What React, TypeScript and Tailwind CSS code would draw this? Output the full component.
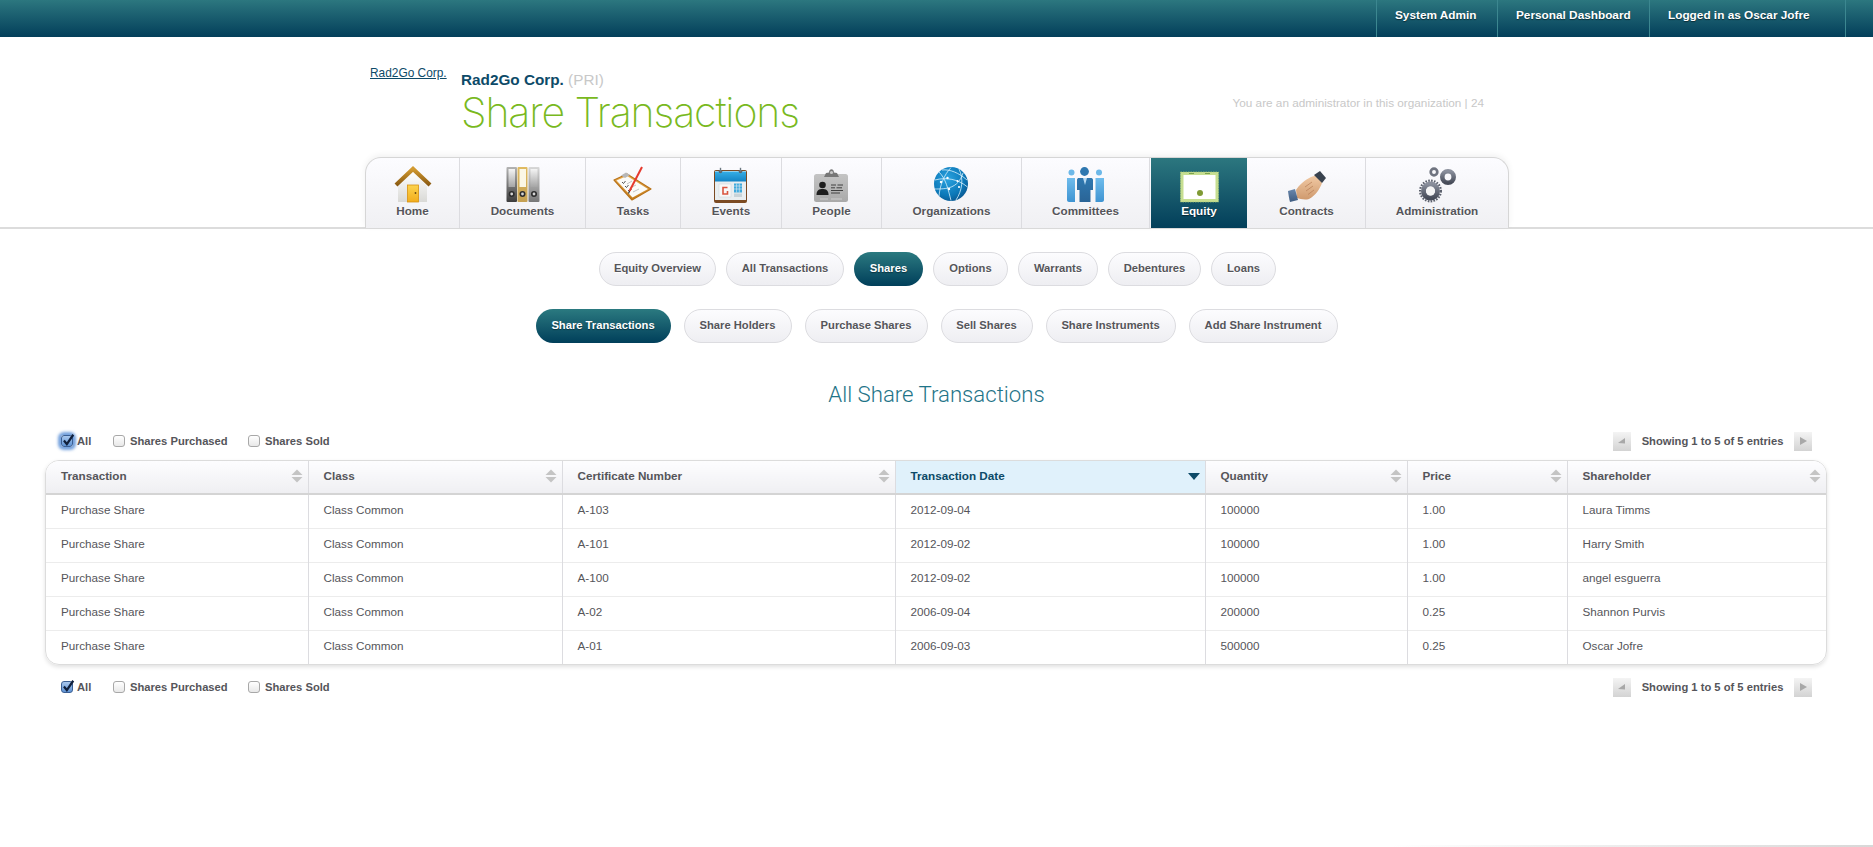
import React from "react";

const Grad = ({ id, c1, c2, x2 = 0, y2 = 1 }: { id: string; c1: string; c2: string; x2?: number; y2?: number }) => (
  <linearGradient id={id} x1="0" y1="0" x2={x2} y2={y2}>
    <stop offset="0" stopColor={c1} />
    <stop offset="1" stopColor={c2} />
  </linearGradient>
);

const Svg = ({ children }: { children: React.ReactNode }) => (
  <svg width="40" height="40" viewBox="0 0 40 40" className="block">
    {children}
  </svg>
);

const HomeIcon = () => (
  <Svg>
    <defs>
      <Grad id="hb" c1="#ffffff" c2="#d9d9d6" />
      <Grad id="hr" c1="#d29a30" c2="#8a5a12" />
      <Grad id="hd" c1="#fcd34d" c2="#f2ad1c" />
    </defs>
    <path d="M5 21 L20 7 L34 21 V37 H5 Z" fill="url(#hb)" />
    <path d="M3 20 L20 4 L37 20" fill="none" stroke="url(#hr)" strokeWidth="4.2" />
    <rect x="14.5" y="20" width="11" height="17" fill="url(#hd)" stroke="#d8920f" strokeWidth="0.8" />
    <circle cx="22.5" cy="28" r="0.9" fill="#6b4a10" />
  </Svg>
);

const DocumentsIcon = () => (
  <Svg>
    <defs>
      <Grad id="d1" c1="#b4b4b4" c2="#3d3d3d" />
      <Grad id="d2" c1="#e0bb62" c2="#c4a052" />
      <Grad id="d3" c1="#d8d8d8" c2="#777777" />
      <Grad id="dl" c1="#f4f4f4" c2="#a5a5a5" />
    </defs>
    <rect x="3.5" y="2" width="10.5" height="35" rx="1" fill="url(#d1)" />
    <rect x="14.5" y="2" width="10" height="35" rx="1" fill="url(#d2)" />
    <rect x="25.5" y="2" width="11" height="35" rx="1" fill="url(#d3)" />
    <rect x="5.5" y="4" width="6.5" height="18" fill="url(#dl)" />
    <rect x="16.5" y="4" width="6.5" height="18" fill="#fbf7e6" />
    <rect x="27.5" y="4" width="7" height="18" fill="url(#dl)" />
    {[8.7, 19.5, 31].map((x) => (
      <g key={x}>
        <circle cx={x} cy="29" r="3" fill="#2c2c2c" />
        <circle cx={x} cy="29" r="1.4" fill="#d5d5d5" />
      </g>
    ))}
  </Svg>
);

const TasksIcon = () => (
  <Svg>
    <defs>
      <Grad id="tb" c1="#f0b458" c2="#c47b18" />
    </defs>
    <path d="M1 15 L14 9 L38 24 L19 35 Z" fill="url(#tb)" stroke="#b9741b" strokeWidth="1.2" strokeLinejoin="round" />
    <path d="M3.5 15.5 L14 11 L35 24 L19.5 32.5 Z" fill="#fbfbf8" />
    <path d="M8 10.5 L13 7.5 L17 10 L12 13 Z" fill="#b7b7b7" />
    <path d="M9 17 l1.5 1.5 l2-2.5 M12 21 l1.5 1.5 l2-2.5 M15 25 l1.5 1.5 l2-2.5" fill="none" stroke="#444" strokeWidth="0.9" />
    <path d="M14 19 L19 16 M17 23 L23 20 M20 27 L26 24" stroke="#b4b4b4" strokeWidth="0.8" />
    <path d="M29 2 L16.5 26" stroke="#e63a2e" strokeWidth="2" />
    <path d="M16.5 26 L15.5 28.5" stroke="#333" strokeWidth="1.2" />
  </Svg>
);

const EventsIcon = () => (
  <Svg>
    <defs>
      <Grad id="eh" c1="#36aee6" c2="#1384c4" />
    </defs>
    <rect x="3" y="5" width="33" height="33" rx="2" fill="#7b4a22" />
    <rect x="4" y="6" width="31" height="29" fill="#e9eef0" />
    <rect x="4" y="6.5" width="31" height="10" fill="url(#eh)" />
    <circle cx="9.5" cy="6.5" r="1.8" fill="#5b6670" />
    <circle cx="29.5" cy="6.5" r="1.8" fill="#5b6670" />
    <rect x="8.8" y="2.8" width="1.4" height="4" fill="#6c7780" />
    <rect x="28.8" y="2.8" width="1.4" height="4" fill="#6c7780" />
    <rect x="23" y="18.5" width="8" height="9" fill="#3ea9dc" />
    <path d="M23 21 H31 M23 24 H31 M25.6 18.5 V27.5 M28.3 18.5 V27.5" stroke="#e9eef0" strokeWidth="0.6" />
    <rect x="8" y="19" width="12" height="13" fill="#f8f8f8" stroke="#ccd4d8" strokeWidth="0.5" />
    <path d="M16.5 22.5 H12 V29 H16.5 V26" fill="none" stroke="#d9553f" strokeWidth="1.6" />
    <rect x="23" y="28.5" width="8" height="3.5" fill="#c8d3d8" />
  </Svg>
);

const PeopleIcon = () => (
  <Svg>
    <defs>
      <Grad id="pb" c1="#c4c4c4" c2="#a9a9a9" />
    </defs>
    <rect x="2" y="9" width="34" height="28" rx="2.5" fill="url(#pb)" />
    <path d="M12 12 L14 8 L17 7.5 C17 3 22 3 22 7.5 L25 8 L27 12 Z" fill="#777" />
    <circle cx="19.5" cy="7.5" r="1.6" fill="#c8c8c8" />
    <circle cx="10.5" cy="20" r="3.3" fill="#1e1e1e" />
    <path d="M4.5 30 C4.5 25 7 24 10.5 24 C14 24 16.5 25 16.5 30 Z" fill="#1e1e1e" />
    <path d="M19 20 H24 M25.5 20 H31 M19 22.8 H23 M24.5 22.8 H30 M19 25.5 H31 M19 28 H28" stroke="#333" strokeWidth="0.9" />
    <path d="M8 34 H16 M19 34 H30" stroke="#bdbdbd" strokeWidth="2" />
  </Svg>
);

const OrgsIcon = () => (
  <Svg>
    <defs>
      <radialGradient id="ob" cx="0.4" cy="0.35" r="0.75">
        <stop offset="0" stopColor="#2aa3e0" />
        <stop offset="0.65" stopColor="#0c78b8" />
        <stop offset="1" stopColor="#0a4f86" />
      </radialGradient>
    </defs>
    <circle cx="19" cy="19" r="17" fill="url(#ob)" />
    <g fill="none" stroke="#d8f1fc" strokeWidth="0.8">
      <path d="M7 7 C14 14 16 24 19 35.5" />
      <path d="M19 2.5 C12 10 8 20 7 31" />
      <path d="M3 15 C14 12 26 14 35.5 22" />
      <path d="M2.5 24 C14 24 26 24 31 8" />
      <path d="M27 4 C32 14 30 26 24 35" />
      <path d="M10 5 C18 4 27 8 35 15" />
    </g>
    <g fill="#fff">
      <circle cx="9" cy="17" r="1.2" />
      <circle cx="15.5" cy="13" r="1.2" />
      <circle cx="25.5" cy="16" r="1.1" />
      <circle cx="17" cy="24" r="1.2" />
      <circle cx="27" cy="22" r="1.1" />
    </g>
  </Svg>
);

const CommitteesIcon = () => (
  <Svg>
    <defs>
      <Grad id="ca" c1="#2f78b0" c2="#2a6496" />
      <Grad id="cb" c1="#6fbcec" c2="#3f94d2" />
    </defs>
    <circle cx="5.5" cy="7.5" r="3" fill="#6cb8e8" />
    <circle cx="33" cy="7.5" r="3" fill="#6cb8e8" />
    <path d="M1 13 H9 V37 H3 C2 37 1 36 1 35 Z" fill="url(#cb)" />
    <path d="M29.5 13 H38 V35 C38 36 37 37 36 37 H29.5 Z" fill="url(#cb)" />
    <circle cx="18.5" cy="6.5" r="4.4" fill="#2f78b0" />
    <path d="M11 15 C11 13.5 12 13 13 13 H24.5 C26 13 27 13.5 27 15 V25 H24.5 V37 H13.5 V25 H11 Z" fill="url(#ca)" />
    <path d="M17 13 L19 20 L21 13 Z" fill="#b9dbf3" />
  </Svg>
);

const EquityIcon = () => (
  <Svg>
    <rect x="1.5" y="7" width="38" height="30" fill="#c6de91" />
    <rect x="1.5" y="7" width="38" height="30" fill="none" stroke="#a9c877" strokeWidth="0.7" strokeDasharray="1.5 1" />
    <rect x="4.5" y="10" width="32" height="24" fill="#ffffff" />
    <path d="M10 8.5 H15 M26 8.5 H31" stroke="#7da24e" strokeWidth="1" />
    <circle cx="21" cy="28" r="3" fill="#7f9a34" />
  </Svg>
);

const ContractsIcon = () => (
  <Svg>
    <defs>
      <Grad id="ch" c1="#f2cba6" c2="#cf9a6e" />
      <Grad id="cc" c1="#6a88ad" c2="#3e5b80" />
    </defs>
    <path d="M9 25 C12 20 18 15 24 12 L30 10 L35 18 C33 24 28 31 22 34 C17 35.5 13 33.5 10 33 Z" fill="url(#ch)" />
    <path d="M18 22 L25 17 M19 26 L26 21 M21 29.5 L27 25" stroke="#b67d54" strokeWidth="0.7" />
    <path d="M1 26 L8 24 L11 35 L3 37 C2 33 1.5 30 1 26 Z" fill="url(#cc)" />
    <path d="M27 10 L33 6 L39 13 L35 18 Z" fill="#39424e" />
  </Svg>
);

const AdminIcon = () => (
  <Svg>
    <defs>
      <Grad id="ag" c1="#8a8f9c" c2="#474c59" />
    </defs>
    <circle cx="13.5" cy="26" r="10.4" fill="none" stroke="#5a5f6b" strokeWidth="2.2" strokeDasharray="1.6 1.3" />
    <circle cx="13.5" cy="26" r="7" fill="none" stroke="url(#ag)" strokeWidth="5" />
    <circle cx="13.5" cy="26" r="4.5" fill="#f4f4f4" />
    <circle cx="17" cy="7" r="3.3" fill="none" stroke="#6f7480" strokeWidth="2.7" />
    <circle cx="31" cy="12" r="5.7" fill="none" stroke="url(#ag)" strokeWidth="4.6" />
  </Svg>
);

const tabs: { label: string; w: string; icon: React.ReactNode; active?: boolean }[] = [
  { label: "Home", w: "w-[94px]", icon: <HomeIcon /> },
  { label: "Documents", w: "w-[126px]", icon: <DocumentsIcon /> },
  { label: "Tasks", w: "w-[95px]", icon: <TasksIcon /> },
  { label: "Events", w: "w-[101px]", icon: <EventsIcon /> },
  { label: "People", w: "w-[100px]", icon: <PeopleIcon /> },
  { label: "Organizations", w: "w-[140px]", icon: <OrgsIcon /> },
  { label: "Committees", w: "w-[128px]", icon: <CommitteesIcon /> },
  { label: "Equity", w: "w-[96px]", icon: <EquityIcon />, active: true },
  { label: "Contracts", w: "w-[118px]", icon: <ContractsIcon /> },
  { label: "Administration", w: "w-[142px]", icon: <AdminIcon /> },
];

const Pill = ({ label, w, active }: { label: string; w: string; active?: boolean }) => (
  <div
    className={
      active
        ? `${w} h-[34px] pb-[1px] flex items-center justify-center rounded-[17px] bg-gradient-to-b from-[#2b7a80] to-[#013f5a] text-white font-bold text-[11.2px] [text-shadow:0_1px_1px_rgba(0,0,0,0.4)]`
        : `${w} h-[34px] pb-[1px] flex items-center justify-center rounded-[17px] border border-[#dcdce0] bg-gradient-to-b from-[#fcfcfe] to-[#eeeef2] text-[#55555a] font-bold text-[11.2px] [text-shadow:0_1px_0_#fff]`
    }
  >
    {label}
  </div>
);

const Check = ({ checked, glow }: { checked?: boolean; glow?: boolean }) => (
  <span
    className={
      checked
        ? `relative block w-[12px] h-[12px] rounded-[3px] border border-[#3a5f94] bg-gradient-to-b from-[#a9c8ee] to-[#5f93d4] ${glow ? "shadow-[0_0_3px_3px_rgba(70,130,210,0.75)]" : ""}`
        : "block w-[12px] h-[12px] rounded-[3px] border border-[#a8a8a8] bg-gradient-to-b from-[#ffffff] to-[#e8e8e8]"
    }
  >
    {checked && (
      <svg viewBox="0 0 12 12" width="14" height="14" className="absolute left-[-1px] top-[-3px]">
        <path d="M2.5 6.5 L5 9.5 L10.5 1.5" fill="none" stroke="#10203c" strokeWidth="1.9" />
      </svg>
    )}
  </span>
);

const PagerBtn = ({ dir }: { dir: "prev" | "next" }) => (
  <div className="w-[18px] h-[19px] bg-gradient-to-b from-[#f4f4f4] to-[#d3d3d3] flex items-center justify-center">
    <svg width="10" height="10" viewBox="0 0 10 10">
      {dir === "prev" ? (
        <path d="M1 7 L8 2 V7.5 Z" fill="#a8a8a8" />
      ) : (
        <path d="M2 1 L9 5 L2 9 Z" fill="#a8a8a8" />
      )}
    </svg>
  </div>
);

const Toolbar = ({ glow }: { glow?: boolean }) => (
  <div className="h-[20px] flex items-center text-[#55555a] font-bold text-[11.2px] pl-[61px] pr-[61px]">
    <Check checked glow={glow} />
    <span className="ml-[4px] w-[36px]">All</span>
    <Check />
    <span className="ml-[5px] w-[118px]">Shares Purchased</span>
    <Check />
    <span className="ml-[5px]">Shares Sold</span>
    <div className="ml-auto flex items-center">
      <PagerBtn dir="prev" />
      <span className="ml-[10px] mr-[10px] w-[143px] text-center whitespace-nowrap">Showing 1 to 5 of 5 entries</span>
      <PagerBtn dir="next" />
    </div>
  </div>
);

const SortIcon = ({ active }: { active?: boolean }) =>
  active ? (
    <svg width="12" height="7" viewBox="0 0 12 7" className="shrink-0 block">
      <path d="M0 0 H12 L6 7 Z" fill="#0d4a68" />
    </svg>
  ) : (
    <svg width="12" height="14" viewBox="0 0 12 14" className="shrink-0 block">
      <path d="M0.5 6 L6 0.5 L11.5 6 Z" fill="#c4c4c4" />
      <path d="M0.5 8 L6 13.5 L11.5 8 Z" fill="#c4c4c4" />
    </svg>
  );

const columns: { label: string; w: string; active?: boolean }[] = [
  { label: "Transaction", w: "w-[262px]" },
  { label: "Class", w: "w-[254px]" },
  { label: "Certificate Number", w: "w-[333px]" },
  { label: "Transaction Date", w: "w-[310px]", active: true },
  { label: "Quantity", w: "w-[202px]" },
  { label: "Price", w: "w-[160px]" },
  { label: "Shareholder", w: "w-[259px]" },
];

const rows = [
  ["Purchase Share", "Class Common", "A-103", "2012-09-04", "100000", "1.00", "Laura Timms"],
  ["Purchase Share", "Class Common", "A-101", "2012-09-02", "100000", "1.00", "Harry Smith"],
  ["Purchase Share", "Class Common", "A-100", "2012-09-02", "100000", "1.00", "angel esguerra"],
  ["Purchase Share", "Class Common", "A-02", "2006-09-04", "200000", "0.25", "Shannon Purvis"],
  ["Purchase Share", "Class Common", "A-01", "2006-09-03", "500000", "0.25", "Oscar Jofre"],
];

export default function App() {
  return (
    <div className="h-[847px] overflow-hidden bg-white flex flex-col font-['Liberation_Sans',Arial,sans-serif]">
      {/* top bar */}
      <div className="h-[37px] shrink-0 bg-gradient-to-b from-[#2c777f] to-[#033f5a] flex justify-end pr-[27px] text-white font-bold text-[11.8px] [text-shadow:0_1px_1px_rgba(0,0,0,0.5)]">
        {[
          ["System Admin", "w-[121px]"],
          ["Personal Dashboard", "w-[152px]"],
          ["Logged in as Oscar Jofre", "w-[196px]"],
        ].map(([t, w]) => (
          <div key={t} className={`${w} border-l border-[#3c8790] flex items-center pl-[18px] pb-[6px]`}>
            {t}
          </div>
        ))}
        <div className="w-px bg-[#3c8790]" />
      </div>

      {/* header */}
      <div className="h-[120px] shrink-0 ml-[370px] w-[1114px] flex relative">
        <a className="mt-[29px] h-[14px] text-[11.9px] leading-[14px] underline text-[#0d4a68] w-[91px]">Rad2Go Corp.</a>
        <div className="mt-[34px]">
          <div className="text-[15.3px] leading-[18px] font-bold text-[#0d4a68]">
            Rad2Go Corp. <span className="font-normal text-[#c8c8c8]">(PRI)</span>
          </div>
          <div className="mt-[0px] text-[41px] leading-[46px] font-extralight tracking-[-1.1px] text-[#79b91e] font-['Inter',sans-serif]">
            Share Transactions
          </div>
        </div>
        <div className="ml-auto mt-[59px] text-[11.75px] leading-[14px] text-[#c8c8c8]">
          You are an administrator in this organization | 24
        </div>
      </div>

      {/* main nav */}
      <div className="h-[72px] shrink-0 border-b-2 border-[#dcdcdc] pl-[365px]">
        <div className="w-[1144px] h-[71px] flex rounded-t-[16px] overflow-hidden border border-b-0 border-[#d6d6d6] bg-gradient-to-b from-[#fcfcff] to-[#f0f0f3] shadow-[0_-2px_6px_rgba(0,0,0,0.06)]">
          {tabs.map((t, i) => (
            <div
              key={t.label}
              className={
                `${t.w} shrink-0 flex flex-col items-center pt-[7px] h-[70px] ` +
                (t.active
                  ? "bg-gradient-to-b from-[#2c777f] to-[#033f5a] text-white mx-[1px] [text-shadow:0_1px_1px_rgba(0,0,0,0.5)]"
                  : "text-[#55555a] [text-shadow:0_1px_0_#fff] " + (i < tabs.length - 1 ? "border-r border-[#dcdce0]" : ""))
              }
            >
              {t.icon}
              <div className="mt-[-1px] text-[11.7px] leading-[14px] font-bold">{t.label}</div>
            </div>
          ))}
        </div>
      </div>

      {/* pills */}
      <div className="mt-[23px] pl-[2px] flex justify-center gap-[10px]">
        <Pill label="Equity Overview" w="w-[117px]" />
        <Pill label="All Transactions" w="w-[118px]" />
        <Pill label="Shares" w="w-[69px]" active />
        <Pill label="Options" w="w-[75px]" />
        <Pill label="Warrants" w="w-[80px]" />
        <Pill label="Debentures" w="w-[93px]" />
        <Pill label="Loans" w="w-[65px]" />
      </div>
      <div className="mt-[23px] flex justify-center gap-[13px]">
        <Pill label="Share Transactions" w="w-[135px]" active />
        <Pill label="Share Holders" w="w-[108px]" />
        <Pill label="Purchase Shares" w="w-[123px]" />
        <Pill label="Sell Shares" w="w-[92px]" />
        <Pill label="Share Instruments" w="w-[130px]" />
        <Pill label="Add Share Instrument" w="w-[149px]" />
      </div>

      <div className="mt-[36px] h-[30px] text-center text-[22.2px] leading-[30px] font-light text-[#1f7488] font-['Roboto',sans-serif]">
        All Share Transactions
      </div>

      <div className="mt-[22px]">
        <Toolbar glow />
      </div>

      {/* table */}
      <div className="mt-[9px] ml-[45px] w-[1782px] rounded-[14px] border border-[#dcdcdc] shadow-[0_2px_4px_rgba(0,0,0,0.12)] overflow-hidden">
        <table className="w-full table-fixed border-collapse text-[11.7px]">
          <thead>
            <tr className="h-[33px] border-b-2 border-[#d4d4d4]">
              {columns.map((c, i) => (
                <th
                  key={c.label}
                  className={
                    `${c.w} p-0 font-bold text-left ` +
                    (i < columns.length - 1 ? "border-r border-[#dcdce0] " : "") +
                    (c.active
                      ? "bg-[#e0f1fb] text-[#0d4a68]"
                      : "bg-gradient-to-b from-[#fdfdff] to-[#efeff2] text-[#55555a]")
                  }
                >
                  <div className="flex items-center justify-between pl-[15px] pr-[5px] pb-[1px]">
                    <span className="pb-[1px]">{c.label}</span>
                    <SortIcon active={c.active} />
                  </div>
                </th>
              ))}
            </tr>
          </thead>
          <tbody>
            {rows.map((r, ri) => (
              <tr key={ri} className={`h-[34px] ${ri < rows.length - 1 ? "border-b border-[#ececec]" : ""}`}>
                {r.map((v, ci) => (
                  <td
                    key={ci}
                    className={`p-0 pl-[15px] pb-[2px] text-[#55555a] ${ci < r.length - 1 ? "border-r border-[#dcdce0]" : ""}`}
                  >
                    {v}
                  </td>
                ))}
              </tr>
            ))}
          </tbody>
        </table>
      </div>

      <div className="mt-[12px]">
        <Toolbar />
      </div>

      <div className="mt-auto h-[2px] ml-[1390px] bg-gradient-to-r from-[#ffffff] to-[#d8d8d8]" />
    </div>
  );
}
